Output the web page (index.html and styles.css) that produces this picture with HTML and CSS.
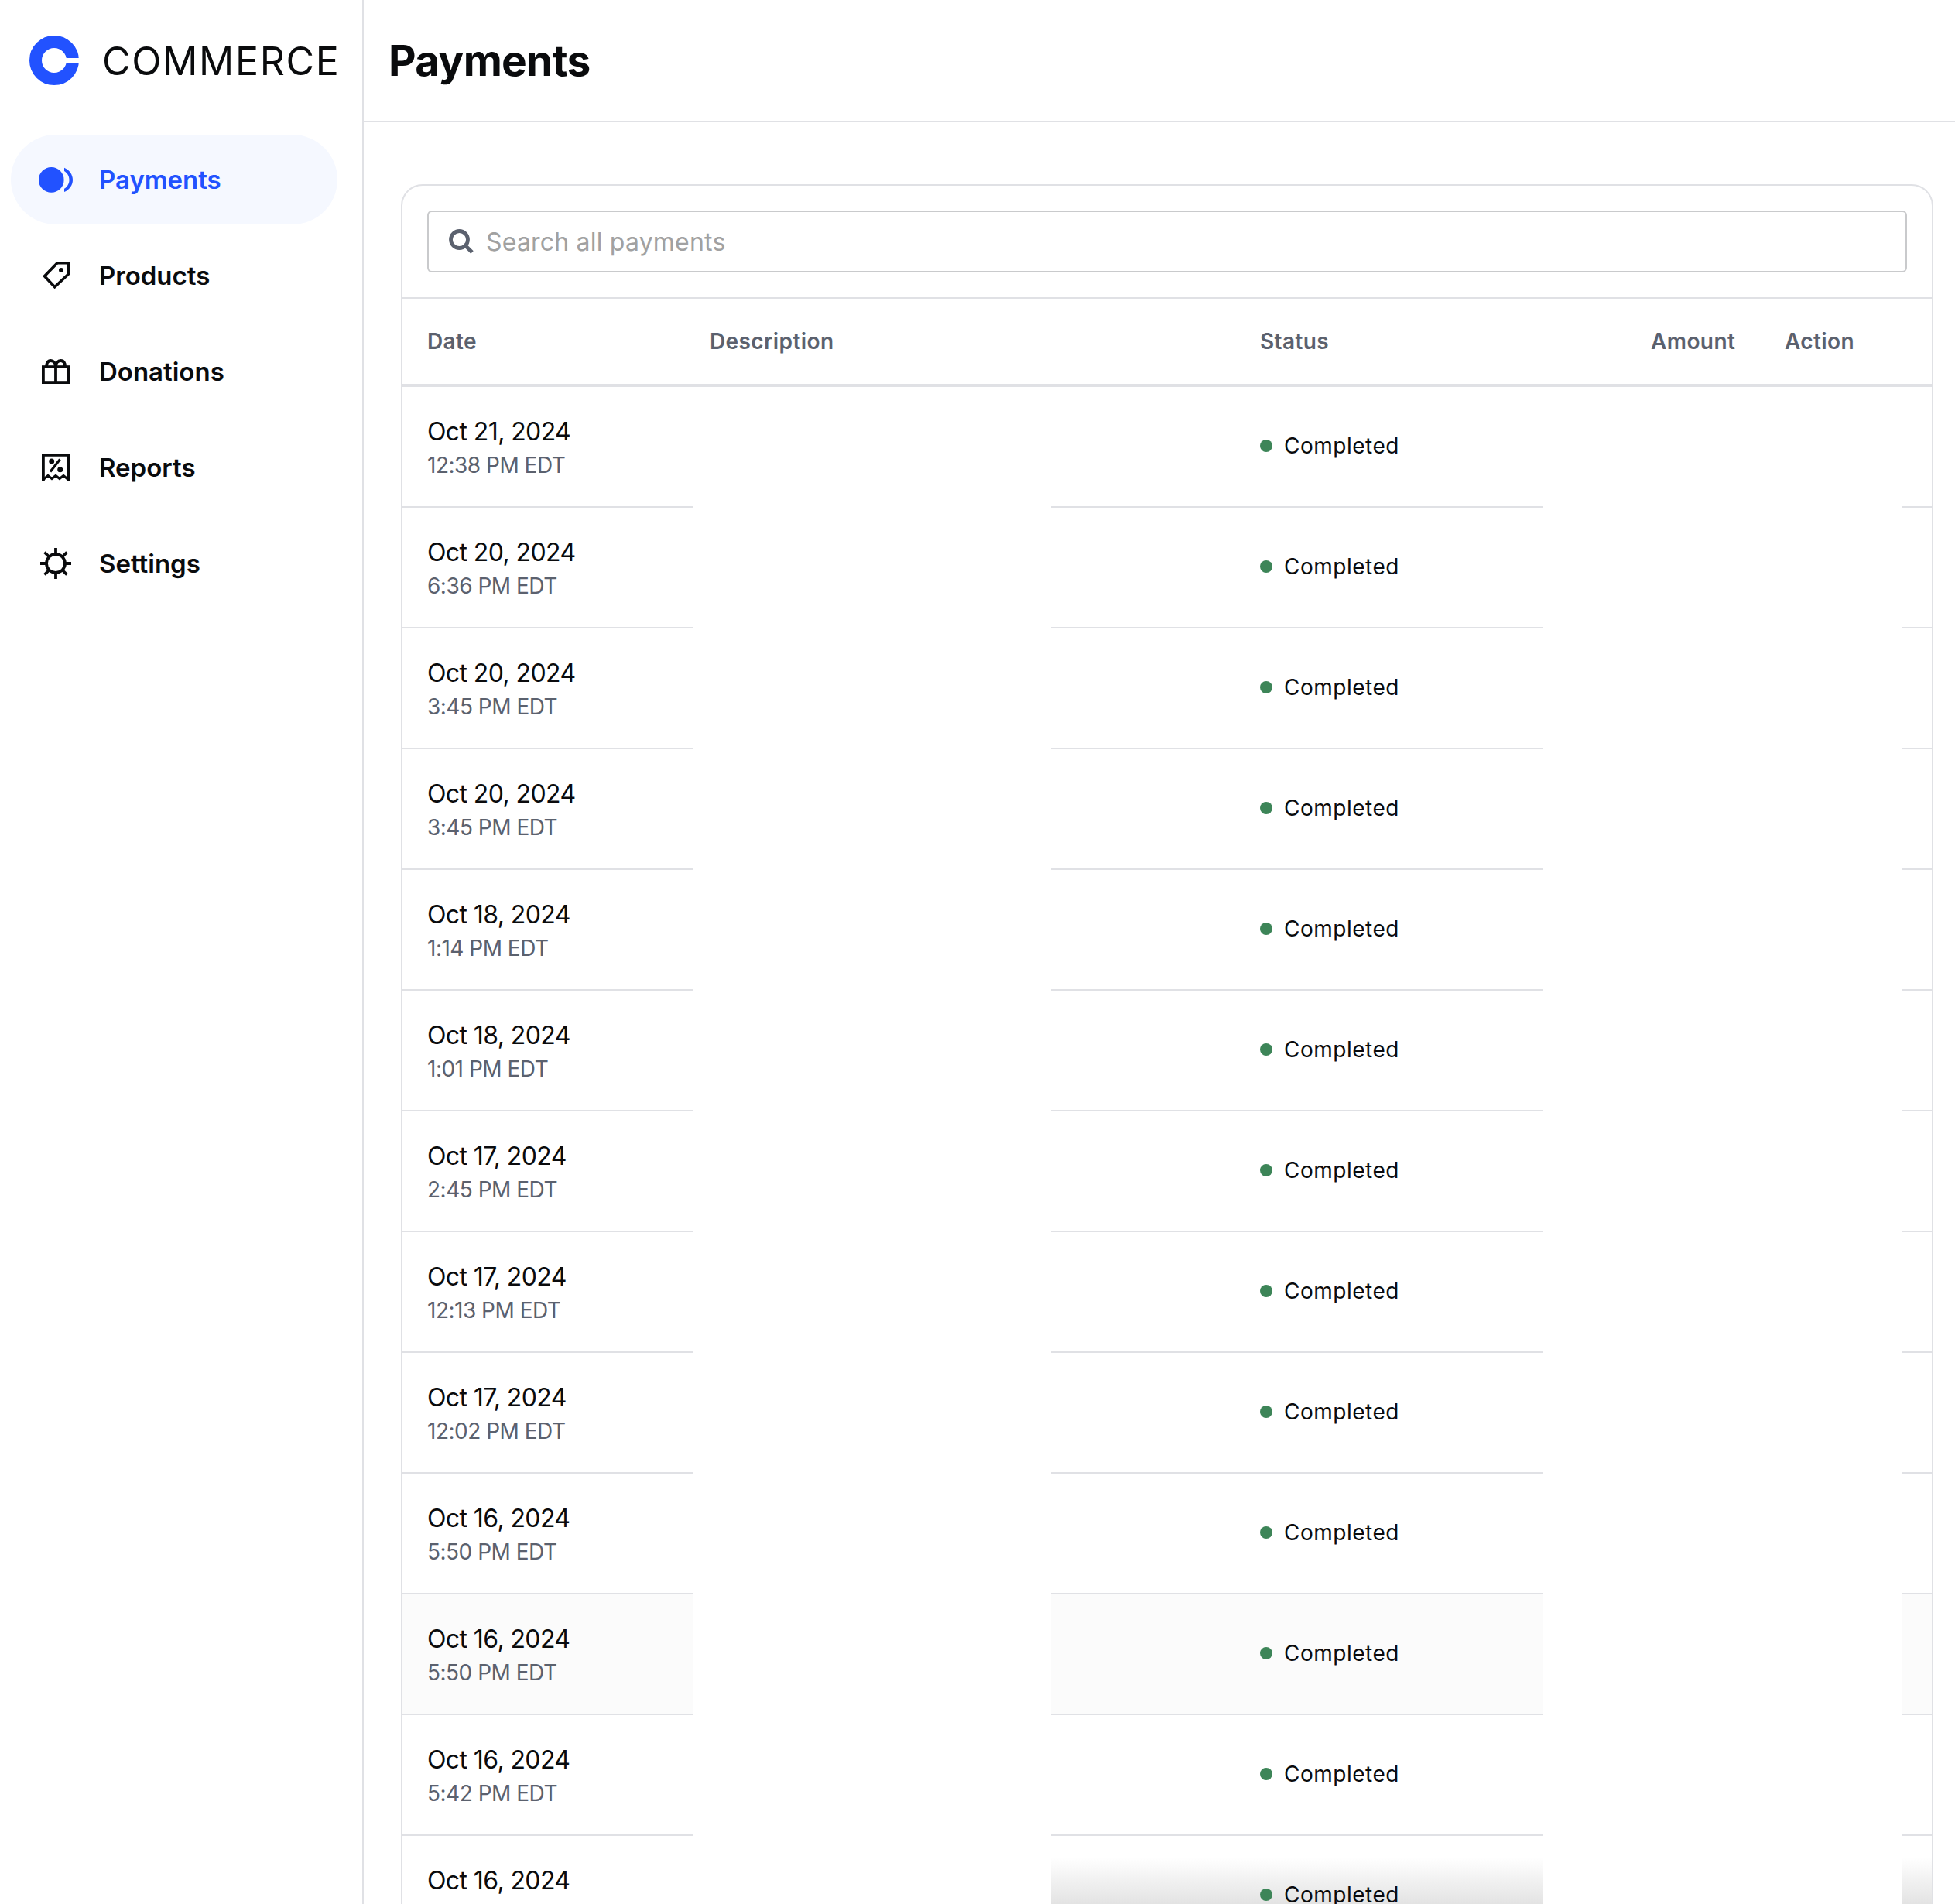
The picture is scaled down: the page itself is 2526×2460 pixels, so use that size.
FILE: index.html
```html
<!DOCTYPE html>
<html lang="en">
<head>
    <meta charset="UTF-8">
    <title>Payments</title>
    <link rel="stylesheet" href="styles.css">
</head>
<body>
    <div class="app">
        <aside class="sidebar">
            <div class="brand">
                <svg class="brand-logo" width="64" height="64" viewBox="0 0 64 64">
                    <circle cx="32" cy="32" r="24" fill="none" stroke="#2252ff" stroke-width="16"/>
                    <rect x="46" y="29" width="18" height="6" fill="#fff"/>
                </svg>
                <span class="brand-name">COMMERCE</span>
            </div>
            <nav class="nav">
                <a class="nav-item active">
                    <span class="nav-icon">
                        <svg width="48" height="33" viewBox="0 0 48 33">
                            <circle cx="18.3" cy="16.4" r="16.3" fill="#2252ff"/>
                            <path d="M35 .8C41.500 3.500 46 9.500 46 16.400S41.500 29.300 35 32V27.800C39 25.300 41.500 21.200 41.500 16.400S39 7.500 35 5Z" fill="#2252ff"/>
                        </svg>
                    </span>
                    Payments
                </a>
                <a class="nav-item">
                    <span class="nav-icon">
                        <svg width="36" height="36" viewBox="0 0 36 36" fill="none" stroke="#0a0b0d" stroke-width="3.600">
                            <path d="M34.200 1.800H20L3.500 18.700 16.700 32.800 34.200 16.200Z"/>
                            <circle cx="25" cy="11" r="3" fill="#0a0b0d" stroke="none"/>
                        </svg>
                    </span>
                    Products
                </a>
                <a class="nav-item">
                    <span class="nav-icon">
                        <svg width="36" height="32" viewBox="0 0 36 32" fill="none" stroke="#0a0b0d" stroke-width="3.800">
                            <rect x="1.900" y="10.100" width="32.200" height="20"/>
                            <path d="M18 10V30"/>
                            <path d="M6 10C6 5 8 2 11.500 2S18 5 18 10C18 5 21 2 24.500 2S30 5 30 10"/>
                        </svg>
                    </span>
                    Donations
                </a>
                <a class="nav-item">
                    <span class="nav-icon">
                        <svg width="36" height="36" viewBox="0 0 36 36" fill="none" stroke="#0a0b0d" stroke-width="3.800">
                            <path d="M1.900 35V1.900H34.100V35"/>
                            <path d="M2 33.500 8 28.500 13 32.500 18 28.500 23 32.500 28 28.500 34 33.500" stroke-width="3"/>
                            <path d="M23.500 7.500 11 23.500" stroke-width="3.200"/>
                            <circle cx="12.700" cy="10" r="3.500" fill="#0a0b0d" stroke="none"/>
                            <circle cx="23.700" cy="20.700" r="3.500" fill="#0a0b0d" stroke="none"/>
                        </svg>
                    </span>
                    Reports
                </a>
                <a class="nav-item">
                    <span class="nav-icon">
                        <svg width="40" height="40" viewBox="0 0 40 40" fill="none" stroke="#0a0b0d" stroke-width="3.800">
                            <circle cx="20" cy="20" r="12"/>
                            <path d="M20 0V8M20 32V40M0 20H8M32 20H40M5.500 5.500 11 11M29 29 34.500 34.500M34.500 5.500 29 11M11 29 5.500 34.500"/>
                        </svg>
                    </span>
                    Settings
                </a>
            </nav>
        </aside>

        <main class="main">
            <header class="page-header">
                <h1>Payments</h1>
            </header>
            <section class="card">
                <div class="search-wrap">
                    <div class="search">
                        <svg width="32" height="32" viewBox="0 0 32 32" fill="none" stroke="#5b616e" stroke-width="4.800">
                            <circle cx="13.500" cy="13.500" r="11"/>
                            <path d="M21 21 30 30"/>
                        </svg>
                        <span class="search-placeholder">Search all payments</span>
                    </div>
                </div>
                <div class="table-head">
                    <span>Date</span>
                    <span>Description</span>
                    <span>Status</span>
                    <span>Amount</span>
                    <span>Action</span>
                </div>

                <div class="row">
                    <div class="cell cell-date"><div class="date">Oct 21, 2024</div><div class="time">12:38 PM EDT</div></div>
                    <div class="blank"></div>
                    <div class="cell cell-status"><span class="dot"></span>Completed</div>
                    <div class="blank"></div>
                    <div class="cell"></div>
                </div>
                <div class="row">
                    <div class="cell cell-date"><div class="date">Oct 20, 2024</div><div class="time">6:36 PM EDT</div></div>
                    <div class="blank"></div>
                    <div class="cell cell-status"><span class="dot"></span>Completed</div>
                    <div class="blank"></div>
                    <div class="cell"></div>
                </div>
                <div class="row">
                    <div class="cell cell-date"><div class="date">Oct 20, 2024</div><div class="time">3:45 PM EDT</div></div>
                    <div class="blank"></div>
                    <div class="cell cell-status"><span class="dot"></span>Completed</div>
                    <div class="blank"></div>
                    <div class="cell"></div>
                </div>
                <div class="row">
                    <div class="cell cell-date"><div class="date">Oct 20, 2024</div><div class="time">3:45 PM EDT</div></div>
                    <div class="blank"></div>
                    <div class="cell cell-status"><span class="dot"></span>Completed</div>
                    <div class="blank"></div>
                    <div class="cell"></div>
                </div>
                <div class="row">
                    <div class="cell cell-date"><div class="date">Oct 18, 2024</div><div class="time">1:14 PM EDT</div></div>
                    <div class="blank"></div>
                    <div class="cell cell-status"><span class="dot"></span>Completed</div>
                    <div class="blank"></div>
                    <div class="cell"></div>
                </div>
                <div class="row">
                    <div class="cell cell-date"><div class="date">Oct 18, 2024</div><div class="time">1:01 PM EDT</div></div>
                    <div class="blank"></div>
                    <div class="cell cell-status"><span class="dot"></span>Completed</div>
                    <div class="blank"></div>
                    <div class="cell"></div>
                </div>
                <div class="row">
                    <div class="cell cell-date"><div class="date">Oct 17, 2024</div><div class="time">2:45 PM EDT</div></div>
                    <div class="blank"></div>
                    <div class="cell cell-status"><span class="dot"></span>Completed</div>
                    <div class="blank"></div>
                    <div class="cell"></div>
                </div>
                <div class="row">
                    <div class="cell cell-date"><div class="date">Oct 17, 2024</div><div class="time">12:13 PM EDT</div></div>
                    <div class="blank"></div>
                    <div class="cell cell-status"><span class="dot"></span>Completed</div>
                    <div class="blank"></div>
                    <div class="cell"></div>
                </div>
                <div class="row">
                    <div class="cell cell-date"><div class="date">Oct 17, 2024</div><div class="time">12:02 PM EDT</div></div>
                    <div class="blank"></div>
                    <div class="cell cell-status"><span class="dot"></span>Completed</div>
                    <div class="blank"></div>
                    <div class="cell"></div>
                </div>
                <div class="row">
                    <div class="cell cell-date"><div class="date">Oct 16, 2024</div><div class="time">5:50 PM EDT</div></div>
                    <div class="blank"></div>
                    <div class="cell cell-status"><span class="dot"></span>Completed</div>
                    <div class="blank"></div>
                    <div class="cell"></div>
                </div>
                <div class="row row-hover">
                    <div class="cell cell-date"><div class="date">Oct 16, 2024</div><div class="time">5:50 PM EDT</div></div>
                    <div class="blank"></div>
                    <div class="cell cell-status"><span class="dot"></span>Completed</div>
                    <div class="blank"></div>
                    <div class="cell"></div>
                </div>
                <div class="row">
                    <div class="cell cell-date"><div class="date">Oct 16, 2024</div><div class="time">5:42 PM EDT</div></div>
                    <div class="blank"></div>
                    <div class="cell cell-status"><span class="dot"></span>Completed</div>
                    <div class="blank"></div>
                    <div class="cell"></div>
                </div>
                <div class="row row-fade">
                    <div class="cell cell-date"><div class="date">Oct 16, 2024</div><div class="time">&nbsp;</div></div>
                    <div class="blank"></div>
                    <div class="cell cell-status"><span class="dot"></span>Completed</div>
                    <div class="blank"></div>
                    <div class="cell"></div>
                </div>
            </section>
        </main>
    </div>
</body>
</html>
```

FILE: styles.css
```css
html, body {
    margin: 0;
    height: 2460px;
    overflow: hidden;
    background-color: #fff;
}
body {
    font-family: Inter, "Noto Sans", sans-serif;
    color: #0a0b0d;
}
.app {
    display: flex;
    height: 2460px;
    overflow: hidden;
}

/* sidebar */
.sidebar {
    width: 468px;
    flex-shrink: 0;
    border-right: 2px solid #e0e1e5;
}
.brand {
    display: flex;
    align-items: center;
    height: 156px;
    padding-left: 38px;
    margin-bottom: 18px;
}
.brand-logo {
    margin-right: 30px;
}
.brand-name {
    margin-top: 2px;
    font-size: 50px;
    letter-spacing: 1.7px;
    line-height: 1;
}
.nav {
    display: flex;
    flex-direction: column;
    gap: 8px;
    margin-left: 14px;
    width: 422px;
}
.nav-item {
    display: flex;
    align-items: center;
    height: 116px;
    border-radius: 58px;
    font-size: 33px;
    font-weight: 600;
}
.nav-icon {
    display: flex;
    justify-content: center;
    align-items: center;
    width: 116px;
    margin-right: -2px;
    flex-shrink: 0;
}
.nav-item.active {
    background-color: #f5f8ff;
    color: #2252ff;
}

/* main */
.main {
    flex: 1;
    min-width: 0;
}
.page-header {
    display: flex;
    align-items: center;
    height: 156px;
    padding-left: 32px;
    border-bottom: 2px solid #e0e1e5;
}
h1 {
    margin: 0;
    font-size: 55px;
    font-weight: 700;
    letter-spacing: -0.8px;
}
.card {
    margin: 80px 28px 0 48px;
    border: 2px solid #e0e1e5;
    border-radius: 28px;
}
.search-wrap {
    padding: 32px;
    border-bottom: 2px solid #e0e1e5;
}
.search {
    display: flex;
    align-items: center;
    gap: 16px;
    height: 76px;
    padding-left: 26px;
    border: 2px solid #c9cacc;
    border-radius: 6px;
}
.search-placeholder {
    font-size: 32px;
    letter-spacing: 0.2px;
    color: #a1a1a1;
}

/* table */
.table-head {
    display: grid;
    grid-template-columns: 365px 711px 505px 173px 1fr;
    align-items: center;
    height: 110px;
    padding-left: 32px;
    border-bottom: 4px solid #e0e1e5;
    font-size: 28px;
    font-weight: 600;
    letter-spacing: 0.4px;
    color: #5b616e;
}
.row {
    display: grid;
    grid-template-columns: 375px 463px 636px 464px 1fr;
    height: 156px;
}
.cell {
    display: flex;
    border-bottom: 2px solid #e0e1e5;
}
.blank {
    background-color: #fff;
}
.cell-date {
    flex-direction: column;
    justify-content: center;
    padding-left: 32px;
    padding-top: 3px;
    background-color: #fff;
}
.date {
    font-size: 32px;
    line-height: 44px;
    letter-spacing: -0.6px;
}
.time {
    font-size: 28px;
    line-height: 42px;
    letter-spacing: -0.5px;
    color: #5b616e;
}
.cell-status {
    align-items: center;
    padding-left: 270px;
    padding-bottom: 2px;
    font-size: 28px;
    letter-spacing: 0.5px;
}
.dot {
    width: 16px;
    height: 16px;
    margin-right: 15px;
    border-radius: 50%;
    background-color: #3d8558;
}
.row-hover .cell {
    background-color: #fbfbfb;
}
.row-fade .cell:not(.cell-date) {
    background-image: linear-gradient(to bottom, #fff 28px, #e3e3e3 88px);
}
```
